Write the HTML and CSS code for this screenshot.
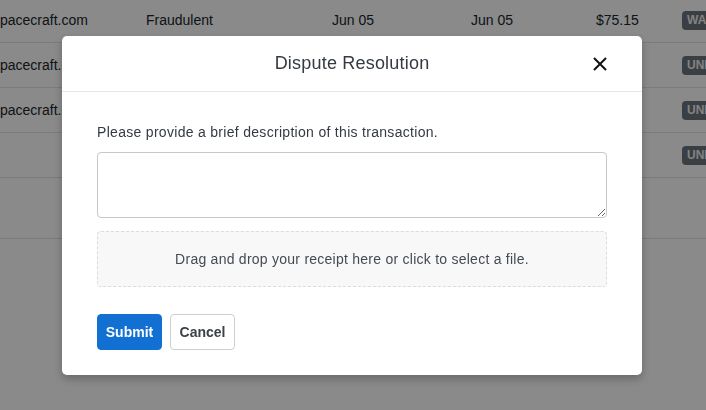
FILE: index.html
```html
<!DOCTYPE html>
<html>
<head>
<meta charset="utf-8">
<link rel="stylesheet" href="styles.css">
</head>
<body>
<div class="page">
  <div class="table">
    <div class="row">
      <span class="c c1">spacecraft.com</span>
      <span class="c c2">Fraudulent</span>
      <span class="c c3">Jun 05</span>
      <span class="c c4">Jun 05</span>
      <span class="c c5">$75.15</span>
      <span class="c c6"><span class="badge">WAITING</span></span>
    </div>
    <div class="row">
      <span class="c c1">spacecraft.com</span>
      <span class="c c2">Duplicate</span>
      <span class="c c3">Jun 04</span>
      <span class="c c4">Jun 04</span>
      <span class="c c5">$24.18</span>
      <span class="c c6"><span class="badge">UNDER REVIEW</span></span>
    </div>
    <div class="row">
      <span class="c c1">spacecraft.com</span>
      <span class="c c2">Duplicate</span>
      <span class="c c3">Jun 02</span>
      <span class="c c4">Jun 02</span>
      <span class="c c5">$10.49</span>
      <span class="c c6"><span class="badge">UNDER REVIEW</span></span>
    </div>
    <div class="row">
      <span class="c c1"></span>
      <span class="c c2">Other</span>
      <span class="c c3">May 30</span>
      <span class="c c4">May 30</span>
      <span class="c c5">$88.20</span>
      <span class="c c6"><span class="badge">UNDER REVIEW</span></span>
    </div>
    <div class="footer-row"></div>
  </div>
</div>

<div class="overlay">
  <div class="modal">
    <div class="modal-header">
      <h2 class="modal-title">Dispute Resolution</h2>
      <button class="close" aria-label="Close">
        <svg width="14" height="14" viewBox="0 0 14 14"><path d="M1 1L13 13M13 1L1 13" stroke="#111" stroke-width="2" fill="none"/></svg>
      </button>
    </div>
    <div class="modal-body">
      <label class="label">Please provide a brief description of this transaction.</label>
      <textarea class="textarea"></textarea>
      <div class="dropzone">Drag and drop your receipt here or click to select a file.</div>
      <div class="actions">
        <button class="btn btn-primary">Submit</button>
        <button class="btn btn-default">Cancel</button>
      </div>
    </div>
  </div>
</div>
</body>
</html>
```

FILE: styles.css
```css
html, body {
  margin: 0;
  padding: 0;
  background: #ffffff;
  font-family: "Liberation Sans", Arial, sans-serif;
  color: #212529;
  overflow: hidden;
  height: 100%;
}

.page {
  width: 706px;
  height: 410px;
  overflow: hidden;
}

.table {
  margin-top: -2px;
  margin-left: -7px;
  width: 760px;
}

.row {
  display: flex;
  align-items: center;
  height: 44px;
  border-bottom: 1px solid #e2e2e2;
  font-size: 14px;
  white-space: nowrap;
}

.c { display: block; }
.c1 { width: 153px; }
.c2 { width: 186px; }
.c3 { width: 139px; }
.c4 { width: 125px; }
.c5 { width: 86px; }
.c6 { width: 70px; }

.badge {
  display: inline-block;
  background: #6c757d;
  color: #f0f0f0;
  font-size: 12px;
  font-weight: bold;
  padding: 3px 5px;
  border-radius: 4px;
  line-height: 13px;
}

.footer-row {
  height: 60px;
  border-bottom: 1px solid #e2e2e2;
}

.overlay {
  position: fixed;
  inset: 0;
  background: rgba(0, 0, 0, 0.46);
  display: flex;
  justify-content: center;
  align-items: flex-start;
  padding: 36px 2px 0 0;
}

.modal {
  width: 580px;
  background: #ffffff;
  border-radius: 5px;
  box-shadow: 0 4px 10px rgba(0, 0, 0, 0.25);
}

.modal-header {
  position: relative;
  height: 55px;
  border-bottom: 1px solid #e6e6e6;
  display: flex;
  align-items: center;
  justify-content: center;
}

.modal-title {
  margin: 0;
  font-size: 18px;
  font-weight: normal;
  color: #343a40;
  letter-spacing: 0.2px;
}

.close {
  position: absolute;
  right: 35px;
  top: 21px;
  width: 14px;
  height: 14px;
  padding: 0;
  border: 0;
  background: none;
  display: flex;
}

.modal-body {
  padding: 30px 35px 25px;
  display: flex;
  flex-direction: column;
}

.label {
  font-size: 14px;
  line-height: 20px;
  color: #343a40;
  margin-bottom: 10px;
  letter-spacing: 0.3px;
}

.textarea {
  box-sizing: border-box;
  width: 510px;
  height: 66px;
  border: 1px solid #c8c8c8;
  border-radius: 4px;
  resize: vertical;
  margin: 0;
  font-family: inherit;
}

.dropzone {
  box-sizing: border-box;
  margin-top: 13px;
  height: 56px;
  border: 1px dashed #dcdcdc;
  border-radius: 4px;
  background: #f8f8f8;
  display: flex;
  align-items: center;
  justify-content: center;
  font-size: 14px;
  color: #454b51;
  letter-spacing: 0.25px;
}

.actions {
  margin-top: 27px;
  display: flex;
  gap: 8px;
}

.btn {
  box-sizing: border-box;
  height: 36px;
  width: 65px;
  border-radius: 4px;
  font-family: inherit;
  font-size: 14px;
  font-weight: bold;
  padding: 0;
  cursor: pointer;
}

.btn-primary {
  background: #1170d2;
  border: 1px solid #1170d2;
  color: #ffffff;
}

.btn-default {
  background: #ffffff;
  border: 1px solid #cfcfcf;
  color: #3d4246;
}
```
